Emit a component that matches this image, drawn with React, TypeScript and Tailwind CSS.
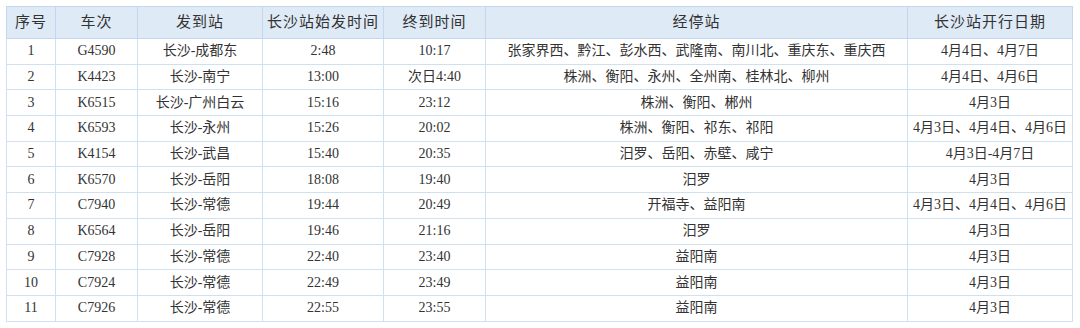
const columns = [
  { label: "序号", width: "w-[49px]" },
  { label: "车次", width: "w-[82px]" },
  { label: "发到站", width: "w-[125px]" },
  { label: "长沙站始发时间", width: "w-[121px]" },
  { label: "终到时间", width: "w-[102px]" },
  { label: "经停站", width: "w-[422px]" },
  { label: "长沙站开行日期", width: "w-[165px]" },
];

const rows = [
  ["1", "G4590", "长沙-成都东", "2:48", "10:17", "张家界西、黔江、彭水西、武隆南、南川北、重庆东、重庆西", "4月4日、4月7日"],
  ["2", "K4423", "长沙-南宁", "13:00", "次日4:40", "株洲、衡阳、永州、全州南、桂林北、柳州", "4月4日、4月6日"],
  ["3", "K6515", "长沙-广州白云", "15:16", "23:12", "株洲、衡阳、郴州", "4月3日"],
  ["4", "K6593", "长沙-永州", "15:26", "20:02", "株洲、衡阳、祁东、祁阳", "4月3日、4月4日、4月6日"],
  ["5", "K4154", "长沙-武昌", "15:40", "20:35", "汨罗、岳阳、赤壁、咸宁", "4月3日-4月7日"],
  ["6", "K6570", "长沙-岳阳", "18:08", "19:40", "汨罗", "4月3日"],
  ["7", "C7940", "长沙-常德", "19:44", "20:49", "开福寺、益阳南", "4月3日、4月4日、4月6日"],
  ["8", "K6564", "长沙-岳阳", "19:46", "21:16", "汨罗", "4月3日"],
  ["9", "C7928", "长沙-常德", "22:40", "23:40", "益阳南", "4月3日"],
  ["10", "C7924", "长沙-常德", "22:49", "23:49", "益阳南", "4月3日"],
  ["11", "C7926", "长沙-常德", "22:55", "23:55", "益阳南", "4月3日"],
];

export default function App() {
  return (
    <div className="h-[328px] w-[1080px] bg-white pl-[6px] pt-[6px] font-['Liberation_Serif','Noto_Sans_CJK_SC',serif] text-[#333]">
      <table className="w-[1067px] table-fixed border-collapse border border-[#a9c7e6]">
        <thead>
          <tr className="h-[32px] bg-[#deeaf6]">
            {columns.map((c) => (
              <th
                key={c.label}
                className={`${c.width} border border-[#c3d8ee] p-0 text-center text-[15px] font-normal tracking-[1px]`}
              >
                {c.label}
              </th>
            ))}
          </tr>
        </thead>
        <tbody>
          {rows.map((r) => (
            <tr key={r[0]} className="h-[25.7px]">
              {r.map((cell, i) => (
                <td
                  key={i}
                  className="border border-[#cfe0f1] p-0 text-center text-[14px] leading-none"
                >
                  {cell}
                </td>
              ))}
            </tr>
          ))}
        </tbody>
      </table>
    </div>
  );
}
